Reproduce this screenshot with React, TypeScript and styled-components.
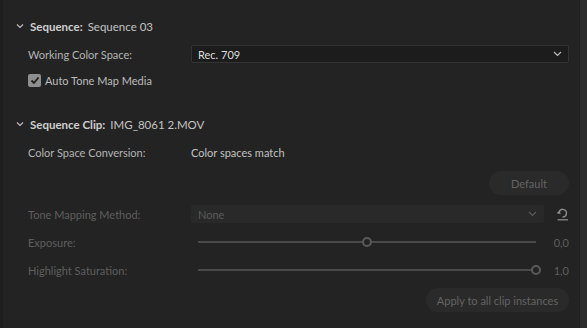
import React from "react";
import styled, { createGlobalStyle } from "styled-components";

const GlobalStyle = createGlobalStyle`
  html, body {
    margin: 0;
    padding: 0;
    background: #232323;
  }
  body {
    font-family: "Lato", "Open Sans", sans-serif;
    -webkit-font-smoothing: antialiased;
  }
`;

const Frame = styled.div`
  display: flex;
  width: 587px;
  height: 328px;
  overflow: hidden;
  background: #232323;
`;

const LeftEdge = styled.div`
  width: 3px;
  background: #1e1e1e;
`;

const Panel = styled.div`
  flex: 1;
  display: flex;
  flex-direction: column;
  padding: 17px 10px 0 13px;
`;

const Scrollbar = styled.div`
  width: 7px;
  background: #2c2c2c;
  border-left: 1px solid #1f1f1f;
`;

const SectionHeader = styled.div`
  display: flex;
  align-items: center;
  height: 18px;
  margin-bottom: 7px;
  font-size: 11.5px;
  color: #c4c4c4;
  gap: 5px;
`;

const Chevron = styled.svg`
  width: 8px;
  height: 8px;
  margin-right: 1px;
`;

const HeaderTitle = styled.span`
  font-weight: 700;
  color: #cfcfcf;
`;

const Row = styled.div<{ $h?: number }>`
  display: grid;
  grid-template-columns: 163px 1fr;
  align-items: center;
  height: ${(p) => p.$h ?? 24}px;
  padding-left: 12px;
`;

const Label = styled.span<{ $disabled?: boolean }>`
  font-size: 11px;
  color: ${(p) => (p.$disabled ? "#5f5f5f" : "#b4b4b4")};
  white-space: nowrap;
`;

const Value = styled.span`
  font-size: 11px;
  color: #c2c2c2;
`;

const Select = styled.div<{ $disabled?: boolean }>`
  display: flex;
  align-items: center;
  justify-content: space-between;
  height: 16px;
  padding: 0 6px 0 6px;
  border-radius: 2px;
  background: ${(p) => (p.$disabled ? "#292929" : "#1c1c1c")};
  border: 1px solid ${(p) => (p.$disabled ? "#292929" : "#333333")};
  font-size: 11px;
  color: ${(p) => (p.$disabled ? "#5c5c5c" : "#dedede")};
`;

const CheckRow = styled.div`
  display: flex;
  align-items: center;
  gap: 4px;
  height: 28px;
  padding-left: 12px;
  font-size: 11px;
  color: #bdbdbd;
`;

const CheckBox = styled.span`
  width: 13px;
  height: 13px;
  border-radius: 2px;
  background: #8e8e8e;
  display: flex;
  align-items: center;
  justify-content: center;
`;

const Spacer = styled.div<{ $h: number }>`
  height: ${(p) => p.$h}px;
`;

const ButtonRow = styled.div<{ $h: number }>`
  display: flex;
  justify-content: flex-end;
  align-items: center;
  height: ${(p) => p.$h}px;
`;

const PillButton = styled.div<{ $w: number }>`
  width: ${(p) => p.$w}px;
  height: 24px;
  border-radius: 12px;
  background: #2a2a2a;
  color: #646464;
  font-size: 11px;
  display: flex;
  align-items: center;
  justify-content: center;
`;

const ControlCell = styled.div`
  display: flex;
  align-items: center;
  gap: 11px;
`;

const SliderTrack = styled.div`
  position: relative;
  flex: 1;
  height: 2px;
  margin-left: 7px;
  background: #4a4a4a;
`;

const Thumb = styled.span`
  position: absolute;
  top: -4px;
  width: 6px;
  height: 6px;
  border: 2px solid #5a5a5a;
  border-radius: 50%;
  background: #232323;
  transform: translateX(-5px);
`;

const Num = styled.span`
  width: 22px;
  text-align: right;
  font-size: 11px;
  color: #5e5e5e;
`;

const ResetIcon = styled.svg`
  width: 14px;
  height: 14px;
  flex: none;
`;

const ChevronDown = ({ color }: { color: string }) => (
  <svg width="9" height="6" viewBox="0 0 9 6">
    <path d="M1 1 L4.5 4.5 L8 1" fill="none" stroke={color} strokeWidth="1.2" />
  </svg>
);

const Section: React.FC<{ title: string; value: string }> = ({ title, value }) => (
  <SectionHeader>
    <Chevron viewBox="0 0 8 8">
      <path d="M1 2.5 L4 5.5 L7 2.5" fill="none" stroke="#bdbdbd" strokeWidth="1.2" />
    </Chevron>
    <HeaderTitle>{title}</HeaderTitle>
    <span>{value}</span>
  </SectionHeader>
);

const Slider: React.FC<{ pct: number; value: string }> = ({ pct, value }) => (
  <ControlCell>
    <SliderTrack>
      <Thumb style={{ left: `${pct}%` }} />
    </SliderTrack>
    <Num>{value}</Num>
  </ControlCell>
);

export default function App() {
  return (
    <Frame>
      <GlobalStyle />
      <LeftEdge />
      <Panel>
        <Section title="Sequence:" value="Sequence 03" />
        <Row>
          <Label>Working Color Space:</Label>
          <Select>
            <span>Rec. 709</span>
            <ChevronDown color="#bdbdbd" />
          </Select>
        </Row>
        <CheckRow>
          <CheckBox>
            <svg width="10" height="9" viewBox="0 0 10 9">
              <path d="M1.5 4.5 L4 7 L8.5 1.5" fill="none" stroke="#1e1e1e" strokeWidth="1.8" />
            </svg>
          </CheckBox>
          Auto Tone Map Media
        </CheckRow>
        <Spacer $h={21} />
        <Section title="Sequence Clip:" value="IMG_8061 2.MOV" />
        <Row>
          <Label>Color Space Conversion:</Label>
          <Value>Color spaces match</Value>
        </Row>
        <ButtonRow $h={38}>
          <PillButton $w={80}>Default</PillButton>
        </ButtonRow>
        <Row>
          <Label $disabled>Tone Mapping Method:</Label>
          <ControlCell>
            <Select $disabled style={{ flex: 1 }}>
              <span>None</span>
              <ChevronDown color="#5a5a5a" />
            </Select>
            <ResetIcon viewBox="0 0 14 14">
              <path
                d="M7.5 10 A3.8 3.8 0 1 0 4.2 4.6"
                fill="none"
                stroke="#8a8a8a"
                strokeWidth="1.4"
              />
              <path d="M1.6 6.2 L4.8 3 L5.6 7.2 Z" fill="#8a8a8a" />
              <path d="M2.5 12.8 H13" stroke="#8a8a8a" strokeWidth="1.3" />
            </ResetIcon>
          </ControlCell>
        </Row>
        <Row $h={32}>
          <Label $disabled>Exposure:</Label>
          <Slider pct={50} value="0,0" />
        </Row>
        <Row>
          <Label $disabled>Highlight Saturation:</Label>
          <Slider pct={100} value="1,0" />
        </Row>
        <ButtonRow $h={36}>
          <PillButton $w={143}>Apply to all clip instances</PillButton>
        </ButtonRow>
      </Panel>
      <Scrollbar />
    </Frame>
  );
}
